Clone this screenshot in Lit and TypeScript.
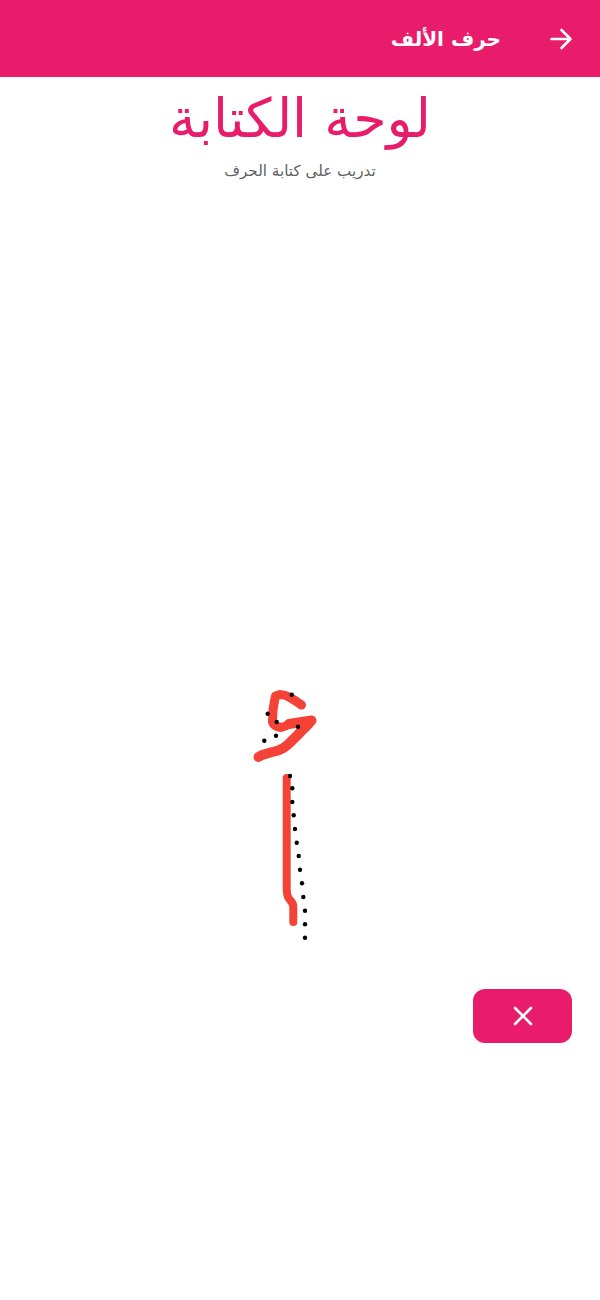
import { LitElement, html, css, svg } from "lit";
import { customElement } from "lit/decorators.js";

const dots: [number, number][] = [
  [291.7, 694.7], [267.7, 713.7], [276.7, 722], [298, 726.7], [276, 735.7], [264.3, 740.7],
  [290, 776], [292.3, 788.3], [292.3, 802], [293.7, 815.3], [295, 829], [296.7, 842.7],
  [298.7, 856], [300, 869.7], [302, 883.3], [303.3, 897], [305, 910.7], [305, 924.3], [305, 937.7],
];

const strokes: { d: string; w: number }[] = [
  { d: "M301.5 705 Q296 701 290 697.5 Q285 694.5 280 694.5 L275.5 696 Q274 703 273 710 L272.5 722 Q274 726.5 281 727.5 Q285 727 289 724", w: 9 },
  { d: "M289 724 Q300 722 311.5 720.5 Q307 726 301 731.5 Q295 738 289 743.5 Q284 748.5 278 750.5 Q270 752.5 262 755 L258.5 757", w: 10 },
  { d: "M286.7 778 L286.7 890 Q287 897 290 900 Q293.3 903 293.3 907 L293.3 922", w: 8 },
];

@customElement("app-root")
export class AppRoot extends LitElement {
  static styles = css`
    :host {
      display: flex;
      flex-direction: column;
      width: 600px;
      height: 1300px;
      background: #fff;
      font-family: "DejaVu Sans", "Noto Sans", sans-serif;
    }
    .bar {
      height: 77px;
      flex: none;
      background: #e91c6b;
      color: #fff;
      display: flex;
      align-items: center;
      gap: 48px;
      padding-right: 27px;
      justify-content: flex-start;
    }
    .bar-title { font-size: 20px; font-weight: 700; line-height: 24px; }
    .arrow { width: 24px; height: 24px; display: block; }
    .head {
      flex: none;
      display: flex;
      flex-direction: column;
      align-items: center;
      padding: 5px 0 10px;
      gap: 5px;
    }
    h1 {
      margin: 0;
      font-size: 54px;
      font-weight: 400;
      line-height: 74px;
      color: #e91c6b;
    }
    .sub { margin: 0; font-size: 15.2px; line-height: 20px; color: #616161; }
    .board { flex: none; height: 798px; display: block; width: 600px; }
    .actions { flex: none; display: flex; justify-content: flex-end; padding-right: 28px; }
    .clear {
      width: 99px;
      height: 54px;
      border: none;
      border-radius: 12px;
      background: #e91c6b;
      display: flex;
      align-items: center;
      justify-content: center;
      padding: 0;
    }
    .clear svg { width: 24px; height: 24px; display: block; }
  `;

  render() {
    return html`
      <div class="bar" dir="rtl">
        <svg class="arrow" viewBox="0 0 24 24" fill="none" stroke="#fff" stroke-width="2.6" stroke-linecap="round" stroke-linejoin="round">
          <path d="M2.5 12H21M12.5 3l9 9-9 9"></path>
        </svg>
        <span class="bar-title">حرف الألف</span>
      </div>
      <div class="head" dir="rtl">
        <h1>لوحة الكتابة</h1>
        <p class="sub">تدريب على كتابة الحرف</p>
      </div>
      <svg class="board" viewBox="0 191 600 798">
        ${strokes.map(
          (s) => svg`<path d=${s.d} fill="none" stroke="#f44336" stroke-width=${s.w} stroke-linecap="round" stroke-linejoin="round"></path>`
        )}
        ${dots.map(([x, y]) => svg`<circle cx=${x} cy=${y} r="2.2" fill="#000"></circle>`)}
      </svg>
      <div class="actions">
        <button class="clear" aria-label="مسح">
          <svg viewBox="0 0 24 24" fill="none" stroke="#fff" stroke-width="2.6" stroke-linecap="round">
            <path d="M4 4l16 16M20 4L4 20"></path>
          </svg>
        </button>
      </div>
    `;
  }
}
